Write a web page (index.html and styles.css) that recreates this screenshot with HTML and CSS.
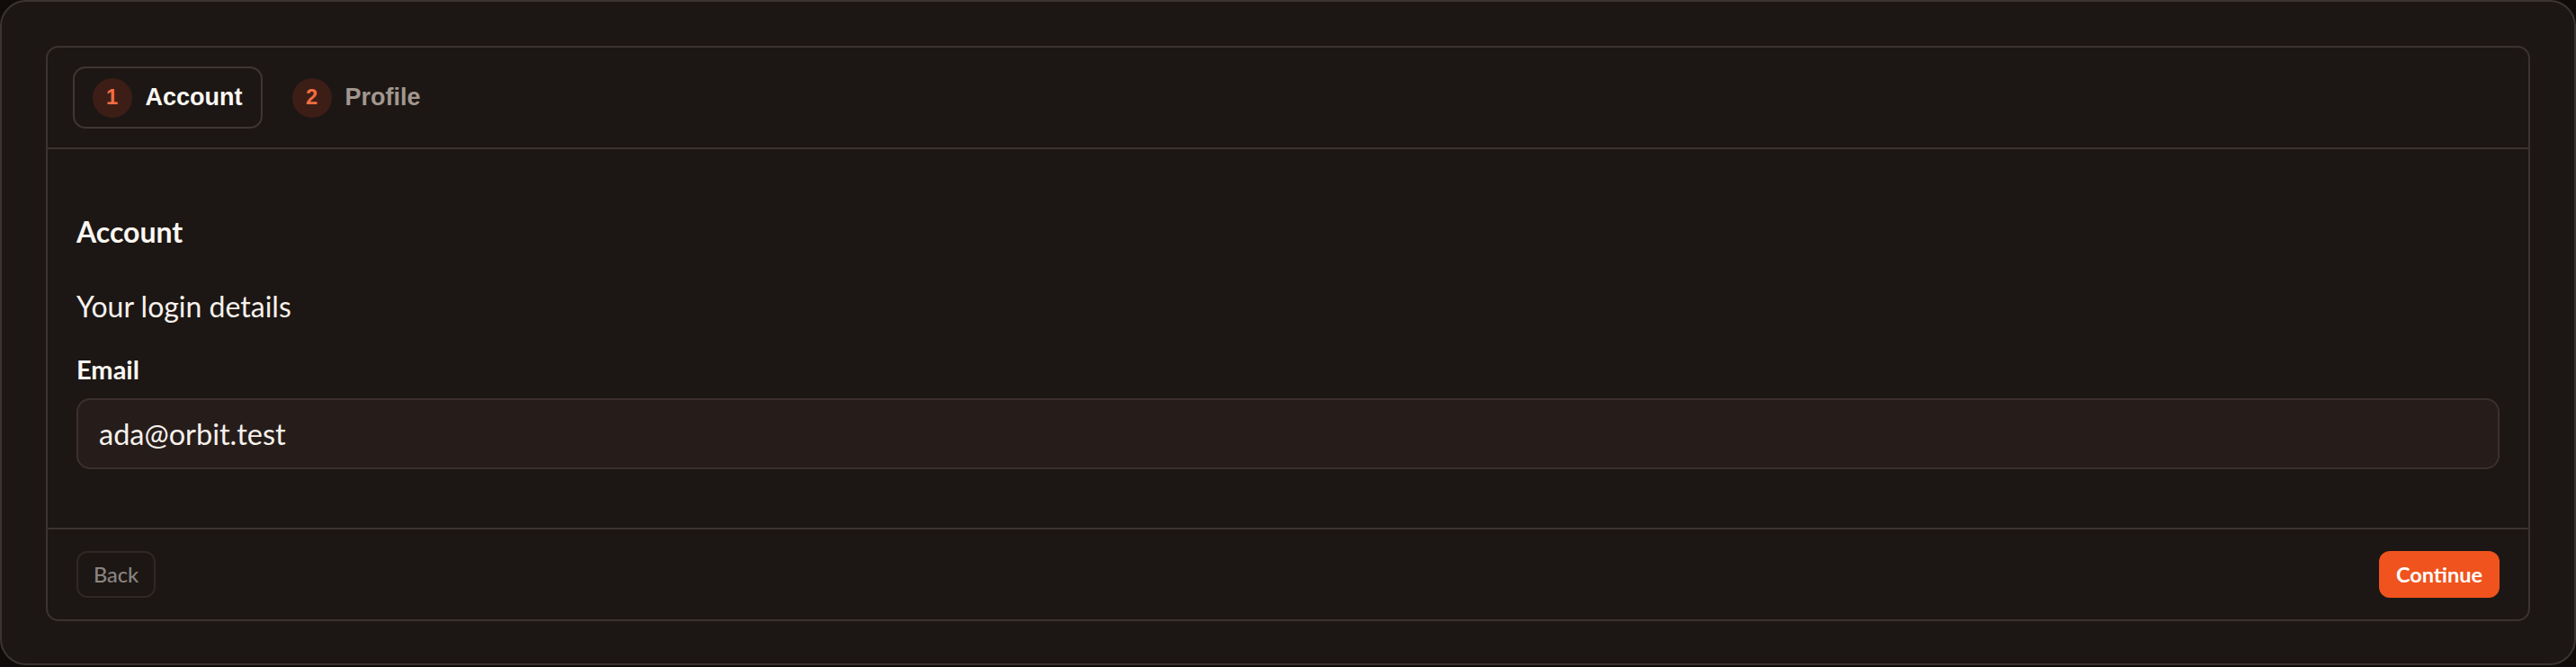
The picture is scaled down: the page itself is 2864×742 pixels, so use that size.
FILE: index.html
```html
<!DOCTYPE html>
<html lang="en">
<head>
<meta charset="utf-8">
<title>Wizard</title>
<link rel="stylesheet" href="styles.css">
</head>
<body>
<div class="frame">
  <section class="wizard">
    <nav class="steps">
      <button class="step active" type="button"><span class="num">1</span><span class="step-label">Account</span></button>
      <button class="step" type="button"><span class="num">2</span><span class="step-label">Profile</span></button>
    </nav>
    <div class="panel">
      <h2 class="panel-title">Account</h2>
      <p class="panel-desc">Your login details</p>
      <label class="field-label" for="email">Email</label>
      <input class="field-input" id="email" type="text" value="ada@orbit.test">
    </div>
    <footer class="actions">
      <button class="btn btn-back" type="button">Back</button>
      <button class="btn btn-continue" type="button">Continue</button>
    </footer>
  </section>
</div>
</body>
</html>
```

FILE: styles.css
```css
* { box-sizing: border-box; }

html, body {
  margin: 0;
  padding: 0;
  background: #0e0b0a;
}

.frame {
  background: #1c1714;
  border: 2px solid #3b3330;
  border-radius: 29px;
  padding: 49px 49px 47px 49px;
  font-family: Lato, "Noto Sans", sans-serif;
  color: #fbf6f1;
}

.wizard {
  border: 2px solid #3b3330;
  border-radius: 14px;
  background: #1c1714;
}

.steps {
  display: flex;
  gap: 11px;
  padding: 21px 28px 21px 27.5px;
  border-bottom: 2px solid #3b3330;
}

.step {
  display: flex;
  align-items: center;
  gap: 15px;
  padding: 10.5px 20px;
  border: 2px solid transparent;
  border-radius: 14px;
  background: transparent;
  font-family: "Liberation Sans", Arial, sans-serif;
  font-weight: 700;
  font-size: 27px;
  color: #a2978f;
  cursor: pointer;
}

.step.active {
  border-color: #3f3633;
  color: #fdf8f3;
}

.num {
  display: flex;
  align-items: center;
  justify-content: center;
  width: 44px;
  height: 44px;
  border-radius: 50%;
  background: #3d1e16;
  color: #f36d42;
  font-size: 23.7px;
  font-weight: 700;
}

.step-label {
  line-height: 1;
}

.panel {
  display: flex;
  flex-direction: column;
  padding: 72px 32px 65px 32px;
}

.panel-title {
  margin: 0 0 43px 0;
  font-size: 32px;
  line-height: 40px;
  font-weight: 700;
  color: #fcf7f2;
}

.panel-desc {
  margin: 0 0 32px 0;
  font-size: 32px;
  line-height: 40px;
  font-weight: 400;
  color: #f7f1ec;
}

.field-label {
  margin: 0 0 13.5px 0;
  font-size: 29px;
  line-height: 36px;
  font-weight: 700;
  color: #fcf7f2;
}

.field-input {
  width: 100%;
  height: 79px;
  padding: 0 23px;
  border: 2px solid #3a302d;
  border-radius: 15px;
  background: #261d1b;
  color: #f7f1ec;
  font-family: Lato, "Noto Sans", sans-serif;
  font-size: 32.5px;
  outline: none;
}

.actions {
  display: flex;
  justify-content: space-between;
  align-items: center;
  padding: 24px 32px;
  border-top: 2px solid #3b3330;
}

.btn {
  height: 52px;
  border-radius: 12px;
  font-family: Lato, "Noto Sans", sans-serif;
  font-size: 23.5px;
  cursor: pointer;
}

.btn-back {
  padding: 0 17px;
  border: 2px solid #2f2825;
  background: transparent;
  color: #8b8480;
  font-weight: 500;
}

.btn-continue {
  padding: 0 19px;
  border: 0;
  background: #f0531d;
  color: #ffffff;
  font-weight: 700;
}
```
